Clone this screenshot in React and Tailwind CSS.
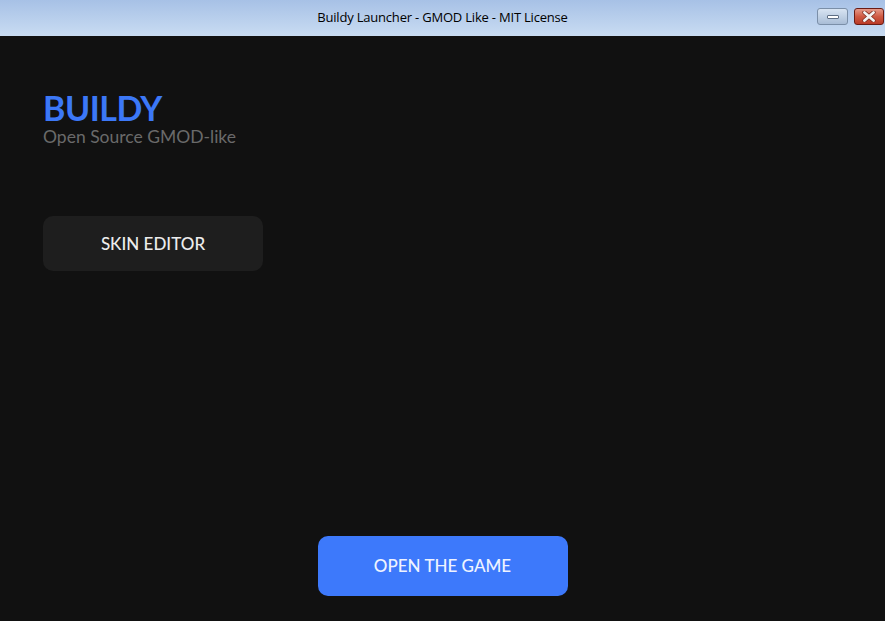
export default function App() {
  return (
    <div className="w-[885px] h-[621px] flex flex-col bg-[#111111] overflow-hidden" style={{ fontFamily: "Lato, 'Open Sans', sans-serif" }}>
      <div className="relative h-9 shrink-0 flex items-center justify-center bg-gradient-to-b from-[#a7c1e6] to-[#c9dcf2]">
        <span className="text-[13px] text-black tracking-[-0.2px]" style={{ fontFamily: "'Liberation Sans Narrow', 'Open Sans', sans-serif" }}>Buildy Launcher - GMOD Like - MIT License</span>
        <div className="absolute right-[1px] top-2 flex gap-[6px]">
          <div className="w-[31px] h-[17px] rounded-[3px] border border-[#7b8fa8] bg-gradient-to-b from-[#d8e4f2] to-[#a9bdd6] flex items-center justify-center">
            <div className="w-[12px] h-[4px] bg-white border border-[#5e6e84] rounded-[1px]" />
          </div>
          <div className="w-[30px] h-[17px] rounded-[3px] border border-[#6b1c14] bg-gradient-to-b from-[#e59a8a] via-[#cf5a44] to-[#b93a26] flex items-center justify-center">
            <svg width="14" height="11" viewBox="0 0 14 11">
              <path d="M2.5 1.5 L11.5 9.5 M11.5 1.5 L2.5 9.5" stroke="#7a2a1e" strokeWidth="4.2" strokeLinecap="round" />
              <path d="M2.5 1.5 L11.5 9.5 M11.5 1.5 L2.5 9.5" stroke="#f4f4f4" strokeWidth="2.8" strokeLinecap="round" />
            </svg>
          </div>
        </div>
      </div>
      <div className="flex-1 flex flex-col px-[43px]">
        <div className="mt-[52px] text-[34px] leading-[40px] font-bold text-[#3c78f7] tracking-[-0.5px]">BUILDY</div>
        <div className="mt-[-2px] text-[17.5px] leading-[22px] text-[#6a6a6a]">Open Source GMOD-like</div>
        <button className="mt-[68px] w-[220px] h-[55px] rounded-[10px] bg-[#1e1e1e] text-[#ececec] text-[17px] font-medium">SKIN EDITOR</button>
        <div className="flex-1" />
        <div className="flex justify-center mb-[25px]">
          <button className="w-[250px] h-[60px] rounded-[10px] bg-[#3d79fb] text-[#eef3ff] text-[17px] font-medium">OPEN THE GAME</button>
        </div>
      </div>
    </div>
  );
}
